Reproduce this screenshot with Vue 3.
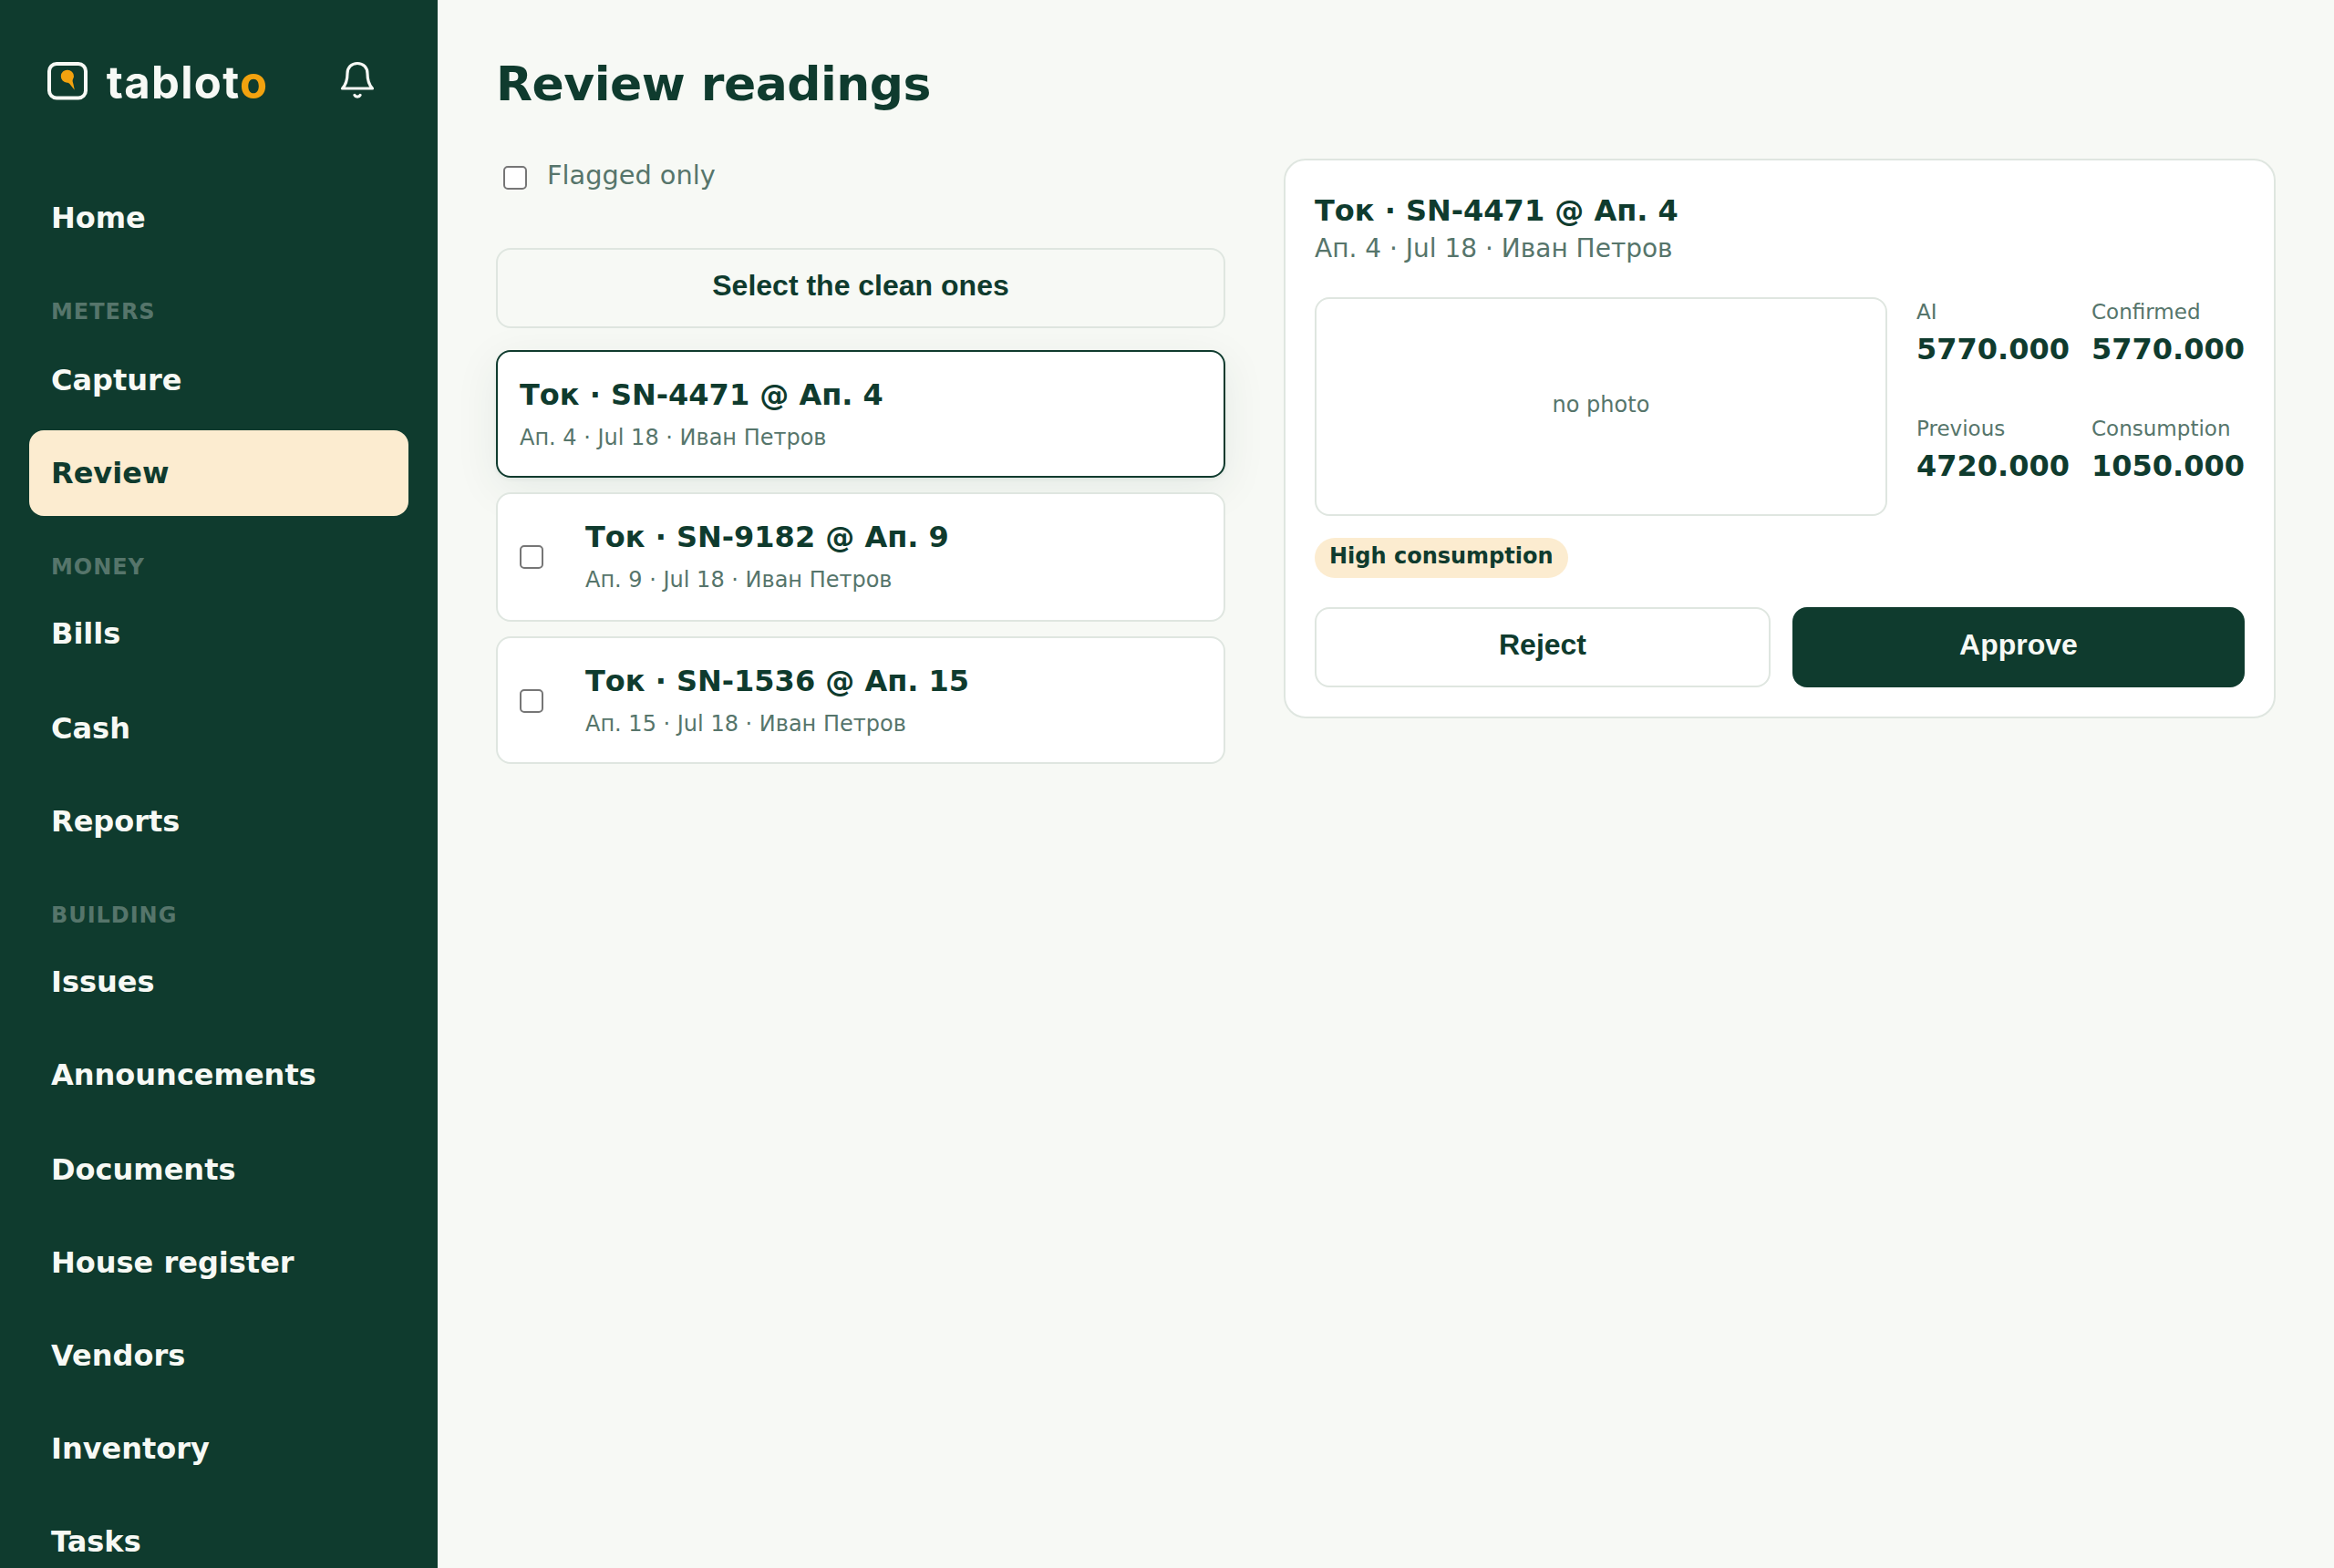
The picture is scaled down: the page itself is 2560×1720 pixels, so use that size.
<template>
  <div class="shell">
    <aside class="sidebar">
      <div class="brand-row">
        <div class="brand">
          <svg class="brand-mark" viewBox="0 0 44 42" fill="none">
            <rect x="2" y="2" width="40" height="37.4" rx="8" stroke="#f7f9f5" stroke-width="4" />
            <path d="M22 8.700a7 7 0 0 1 7 7c0 1.800-1.500 3.300-1.400 5.100.1 1.500.7 2.600 1 4.200l1.200 5.700-5.400-6.600c-.9-1-1.600-1.400-2.800-1.400A7 7 0 0 1 22 8.700z" fill="#f2a20f" />
          </svg>
          <span class="brand-name">tablot<span class="brand-accent">o</span></span>
        </div>
        <button class="bell" type="button" aria-label="Notifications">
          <svg viewBox="0 0 40 44" fill="none" stroke="currentColor" stroke-width="3.2" stroke-linecap="round" stroke-linejoin="round">
            <path d="M20 3.500c-6.700 0-11 4.700-11 11.200 0 8-1.300 11.900-5.500 16.300h33c-4.200-4.400-5.500-8.300-5.500-16.300 0-6.500-4.300-11.200-11-11.200z" />
            <path d="M16.900 38.400c.5 1.100 1.600 1.700 3.100 1.700s2.600-.6 3.100-1.700" />
          </svg>
        </button>
      </div>

      <nav class="nav">
        <template v-for="group in groups" :key="group.label">
          <div v-if="group.label" class="nav-label">{{ group.label }}</div>
          <a
            v-for="item in group.items"
            :key="item"
            class="nav-item"
            :class="{ active: item === current }"
          >{{ item }}</a>
        </template>
      </nav>
    </aside>

    <main class="main">
      <h1 class="page-title">Review readings</h1>

      <div class="columns">
        <section class="queue">
          <label class="filter">
            <input v-model="flaggedOnly" type="checkbox" />
            <span>Flagged only</span>
          </label>

          <button class="btn btn-outline btn-select" type="button">Select the clean ones</button>

          <ul class="list">
            <li
              v-for="reading in readings"
              :key="reading.serial"
              class="row"
              :class="{ selected: reading.serial === selected.serial }"
            >
              <span v-if="!reading.flag" class="row-check">
                <input type="checkbox" />
              </span>
              <div class="row-body">
                <div class="row-title">{{ title(reading) }}</div>
                <div class="row-meta">{{ meta(reading) }}</div>
              </div>
            </li>
          </ul>
        </section>

        <section class="detail">
          <div class="detail-title">{{ title(selected) }}</div>
          <div class="detail-meta">{{ meta(selected) }}</div>

          <div class="evidence">
            <div class="photo">no photo</div>
            <div class="figures">
              <div v-for="figure in figures" :key="figure.label">
                <div class="figure-label">{{ figure.label }}</div>
                <div class="figure-value">{{ figure.value }}</div>
              </div>
            </div>
          </div>

          <span class="flag">{{ selected.flag }}</span>

          <div class="actions">
            <button class="btn btn-outline" type="button">Reject</button>
            <button class="btn btn-primary" type="button">Approve</button>
          </div>
        </section>
      </div>
    </main>
  </div>
</template>

<script setup>
import { ref } from 'vue';

const current = 'Review';

const groups = [
  { label: '', items: ['Home'] },
  { label: 'Meters', items: ['Capture', 'Review'] },
  { label: 'Money', items: ['Bills', 'Cash', 'Reports'] },
  {
    label: 'Building',
    items: ['Issues', 'Announcements', 'Documents', 'House register', 'Vendors', 'Inventory', 'Tasks']
  }
];

const readings = [
  { serial: 'SN-4471', unit: 'Ап. 4', flag: 'High consumption' },
  { serial: 'SN-9182', unit: 'Ап. 9' },
  { serial: 'SN-1536', unit: 'Ап. 15' }
];

const figures = [
  { label: 'AI', value: '5770.000' },
  { label: 'Confirmed', value: '5770.000' },
  { label: 'Previous', value: '4720.000' },
  { label: 'Consumption', value: '1050.000' }
];

const flaggedOnly = ref(false);
const selected = ref(readings[0]);

const title = (r) => `Ток · ${r.serial} @ ${r.unit}`;
const meta = (r) => `${r.unit} · Jul 18 · Иван Петров`;
</script>

<style>
html,
body {
  margin: 0;
  height: 100%;
  overflow: hidden;
  background: #f7f9f5;
}
</style>

<style scoped>
/* laid out at 1280x860 and drawn at double size */
.shell {
  --ink: #0f3b2e;
  --paper: #f7f9f5;
  --muted: #56756b;
  --line: #dfe6e0;
  --cream: #fcecd0;
  --amber: #f2a20f;
  display: flex;
  width: 1280px;
  height: 860px;
  overflow: hidden;
  transform: scale(2);
  transform-origin: 0 0;
  background: var(--paper);
  color: var(--ink);
  font-family: "DejaVu Sans", sans-serif;
  font-size: 16px;
  line-height: 1.45;
}

.shell * {
  box-sizing: border-box;
}

.sidebar {
  flex: none;
  width: 240px;
  padding: 16px;
  overflow: hidden;
  background: var(--ink);
  color: var(--paper);
}

.brand-row {
  display: flex;
  align-items: flex-start;
  justify-content: space-between;
  height: 80.3px;
  padding: 12px 18px 0 10px;
}

.brand {
  display: flex;
  align-items: flex-start;
}

.brand-mark {
  width: 22px;
  height: 21px;
  margin-top: 6px;
}

.brand-name {
  margin-left: 10.4px;
  font-family: Inter, sans-serif;
  font-size: 24.5px;
  font-weight: 700;
  line-height: 34px;
  letter-spacing: 0.65px;
}

.brand-accent {
  color: var(--amber);
}

.bell {
  width: 20px;
  height: 22px;
  margin-top: 5px;
  padding: 0;
  border: none;
  background: none;
  color: inherit;
}

.bell svg {
  display: block;
  width: 20px;
  height: 22px;
}

.nav {
  display: flex;
  flex-direction: column;
  gap: 4px;
}

.nav-label {
  padding: 15.7px 12px 0.2px;
  color: var(--muted);
  font-size: 12px;
  font-weight: 700;
  letter-spacing: 0.04em;
  text-transform: uppercase;
}

.nav-item {
  padding: 12px;
  border-radius: 8px;
  font-weight: 600;
}

.nav-item.active {
  background: var(--cream);
  color: var(--ink);
}

.main {
  flex: 1;
  padding: 31px 32px;
}

.page-title {
  margin: 0 0 25px;
  font-size: 26px;
  font-weight: 700;
  line-height: 31px;
  letter-spacing: -0.01em;
}

.columns {
  display: grid;
  grid-template-columns: 400px 1fr;
  align-items: start;
  gap: 32px;
}

.filter {
  display: flex;
  align-items: flex-start;
  gap: 8px;
  height: 49px;
  color: var(--muted);
  font-size: 14.4px;
  line-height: 18px;
}

.filter input {
  margin: 4px 3px 3px 4px;
}

.btn {
  height: 44px;
  padding: 0 16px 2px;
  border: none;
  border-radius: 8px;
  font-family: "Liberation Sans", Arial, sans-serif;
  font-size: 16px;
  font-weight: 600;
}

.btn-outline {
  border: 1px solid var(--line);
  background: transparent;
  color: var(--ink);
}

.btn-primary {
  background: var(--ink);
  color: var(--paper);
}

.btn-select {
  display: block;
  width: 100%;
}

.list {
  display: flex;
  flex-direction: column;
  gap: 8px;
  margin: 12px 0 0;
  padding: 0;
  list-style: none;
}

.row {
  display: flex;
  min-height: 70.45px;
  padding: 12px;
  border: 1px solid var(--line);
  border-radius: 8px;
  background: #fff;
}

.row.selected {
  border-color: var(--ink);
  box-shadow: 0 1px 2px rgba(15, 59, 46, 0.06), 0 6px 24px rgba(15, 59, 46, 0.08);
}

.row-check {
  display: flex;
  align-items: center;
  width: 36px;
}

.row-check input {
  margin: 0;
}

.row-title {
  font-weight: 600;
  line-height: 23px;
}

.row-meta {
  margin-top: 3.9px;
  color: var(--muted);
  font-size: 12px;
}

.detail {
  padding: 16px;
  border: 1px solid var(--line);
  border-radius: 12px;
  background: #fff;
}

.detail-title {
  font-weight: 700;
  line-height: 23px;
}

.detail-meta {
  color: var(--muted);
  font-size: 14px;
  line-height: 18px;
}

.evidence {
  display: grid;
  grid-template-columns: 1fr auto;
  gap: 16px;
  height: 120px;
  margin-top: 18px;
}

.photo {
  display: flex;
  align-items: center;
  justify-content: center;
  border: 1px solid var(--line);
  border-radius: 8px;
  color: var(--muted);
  font-size: 12px;
}

.figures {
  display: grid;
  grid-template-columns: auto auto;
  gap: 8px 12px;
}

.figure-label {
  color: var(--muted);
  font-size: 11.52px;
}

.figure-value {
  font-weight: 700;
}

.flag {
  display: block;
  width: fit-content;
  margin-top: 12.2px;
  padding: 2px 8px;
  border-radius: 999px;
  background: var(--cream);
  font-size: 12px;
  font-weight: 600;
}

.actions {
  display: flex;
  gap: 12px;
  margin-top: 16.4px;
}

.actions .btn {
  flex: 1;
}
</style>
